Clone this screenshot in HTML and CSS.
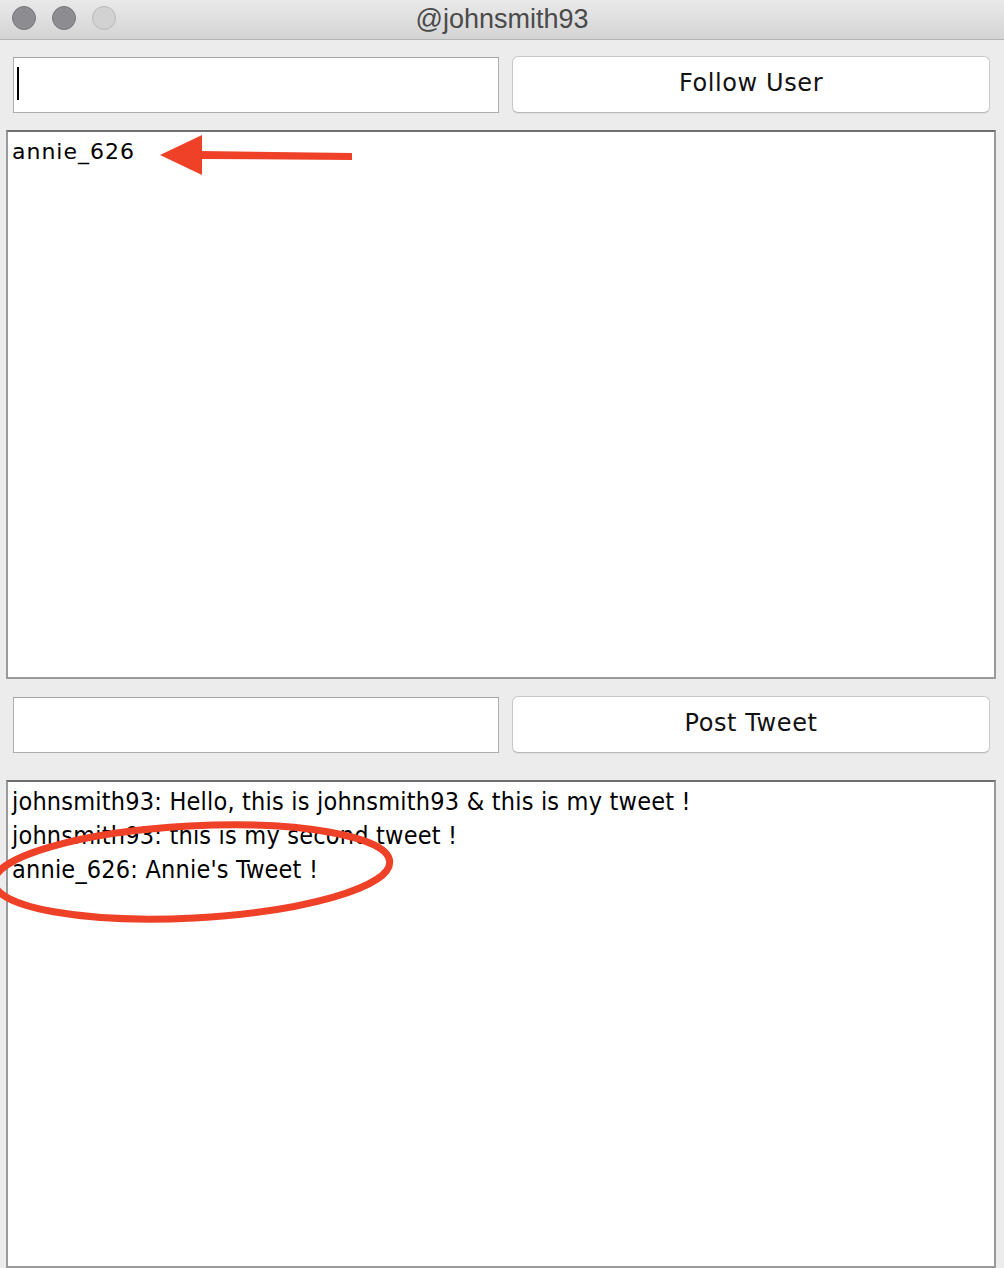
FILE: index.html
```html
<!DOCTYPE html>
<html>
<head>
<meta charset="utf-8">
<link rel="stylesheet" href="styles.css">
</head>
<body>
<div class="window">
  <div class="titlebar">
    <div class="lights">
      <span class="light dark"></span>
      <span class="light dark"></span>
      <span class="light off"></span>
    </div>
    <div class="title">@johnsmith93</div>
  </div>
  <div class="content">
    <div class="row row-first">
      <div class="input"><span class="caret"></span></div>
      <div class="button">Follow User</div>
    </div>
    <div class="list list-following">
      <div class="line">annie_626</div>
      <svg class="arrow" width="200" height="50" viewBox="0 0 200 50">
        <polygon points="0,25 42,5 42,45" fill="#ee4128"/>
        <polygon points="40,21 192,23 192,30 40,29" fill="#ee4128"/>
      </svg>
    </div>
    <div class="row row-second">
      <div class="input"></div>
      <div class="button">Post Tweet</div>
    </div>
    <div class="list list-tweets">
      <div class="tline">johnsmith93: Hello, this is johnsmith93 &amp; this is my tweet !</div>
      <div class="tline">johnsmith93: this is my second tweet !</div>
      <div class="tline">annie_626: Annie's Tweet !</div>
      <svg class="ring" width="420" height="130" viewBox="0 0 420 130">
        <ellipse cx="200" cy="65" rx="198" ry="46" fill="none" stroke="#ee4128" stroke-width="7" transform="rotate(-3 200 65)"/>
      </svg>
    </div>
  </div>
</div>
</body>
</html>
```
FILE: styles.css
```css
html, body {
  margin: 0;
  padding: 0;
  background: #ececec;
}
.window {
  width: 1004px;
  height: 1268px;
  display: flex;
  flex-direction: column;
  overflow: hidden;
}
.titlebar {
  position: relative;
  height: 39px;
  flex: none;
  background: linear-gradient(#e9e9e9, #d4d4d4);
  border-bottom: 1px solid #b4b4b4;
  display: flex;
  align-items: center;
  justify-content: center;
}
.lights {
  position: absolute;
  left: 12px;
  top: 6px;
  display: flex;
  gap: 16px;
}
.light {
  width: 24px;
  height: 24px;
  border-radius: 50%;
  box-sizing: border-box;
}
.light.dark {
  background: #8d8c91;
  border: 1px solid #78777c;
}
.light.off {
  background: #d2d2d2;
  border: 1px solid #b9b9b9;
}
.title {
  font-family: "Liberation Sans", Arial, sans-serif;
  font-size: 27px;
  color: #4a4a4a;
  margin-top: -1px;
}
.content {
  flex: 1;
  display: flex;
  flex-direction: column;
  padding: 16px 8px 0 6px;
}
.row {
  display: flex;
  gap: 13px;
  padding: 0 6px 0 7px;
  height: 57px;
  flex: none;
}
.input {
  width: 484px;
  margin-top: 1px;
  height: 54px;
  background: #fff;
  border: 1px solid #adadad;
  border-top-color: #a5a5a5;
  position: relative;
}
.caret {
  position: absolute;
  left: 3px;
  top: 9px;
  width: 2px;
  height: 33px;
  background: #000;
}
.button {
  flex: 1;
  background: #fff;
  border: 1px solid #c9c9c9;
  border-bottom-color: #b9b9b9;
  border-radius: 6px;
  box-shadow: 0 1px 1px rgba(0,0,0,0.06);
  display: flex;
  align-items: center;
  justify-content: center;
  font-family: "DejaVu Sans", "Open Sans", sans-serif;
  font-size: 24px;
  letter-spacing: 0.6px;
  color: #111;
  padding-bottom: 3px;
}
.list {
  position: relative;
  background: #fff;
  border-top: 2px solid #6f6f6f;
  border-left: 2px solid #9a9a9a;
  border-right: 2px solid #9a9a9a;
  border-bottom: 2px solid #9a9a9a;
  flex: none;
}
.list-following {
  margin-top: 17px;
  padding: 3px 4px;
  box-sizing: border-box;
  height: 549px;
}
.row-second {
  margin-top: 17px;
}
.list-tweets {
  margin-top: 27px;
  flex: 1;
  padding: 3px 4px;
}
.line {
  font-family: "DejaVu Sans", "Open Sans", sans-serif;
  font-size: 22px;
  letter-spacing: 1px;
  line-height: 34px;
  color: #000;
}
.tline {
  font-family: "DejaVu Sans Condensed", "Liberation Sans Narrow", "Liberation Sans", sans-serif;
  font-size: 25px;
  letter-spacing: 0.2px;
  line-height: 34px;
  color: #000;
}
.arrow {
  position: absolute;
  left: 152px;
  top: -2px;
}
.ring {
  position: absolute;
  left: -16px;
  top: 25px;
}
```
